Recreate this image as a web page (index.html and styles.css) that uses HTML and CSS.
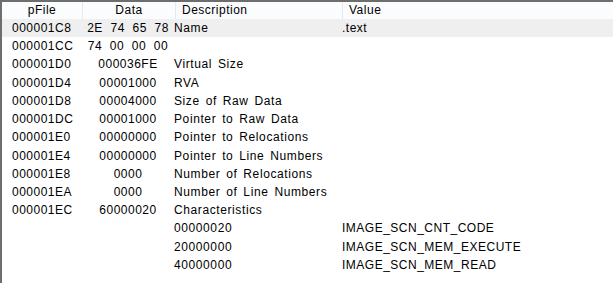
FILE: index.html
```html
<!DOCTYPE html>
<html>
<head>
<meta charset="utf-8">
<link rel="stylesheet" href="styles.css">
</head>
<body>
<div class="list">
  <div class="head">
    <div class="hc c-pfile">pFile</div>
    <div class="hc c-data sep">Data</div>
    <div class="hc c-desc sep">Description</div>
    <div class="hc c-value sep">Value</div>
  </div>
  <div class="rows">
    <div class="row sel"><div class="pf">000001C8</div><div class="dt">2E&nbsp;&nbsp;74&nbsp;&nbsp;65&nbsp;&nbsp;78</div><div class="ds">Name</div><div class="vl">.text</div></div>
    <div class="row"><div class="pf">000001CC</div><div class="dt">74&nbsp;&nbsp;00&nbsp;&nbsp;00&nbsp;&nbsp;00</div><div class="ds"></div><div class="vl"></div></div>
    <div class="row"><div class="pf">000001D0</div><div class="dt">000036FE</div><div class="ds">Virtual Size</div><div class="vl"></div></div>
    <div class="row"><div class="pf">000001D4</div><div class="dt">00001000</div><div class="ds">RVA</div><div class="vl"></div></div>
    <div class="row"><div class="pf">000001D8</div><div class="dt">00004000</div><div class="ds">Size of Raw Data</div><div class="vl"></div></div>
    <div class="row"><div class="pf">000001DC</div><div class="dt">00001000</div><div class="ds">Pointer to Raw Data</div><div class="vl"></div></div>
    <div class="row"><div class="pf">000001E0</div><div class="dt">00000000</div><div class="ds">Pointer to Relocations</div><div class="vl"></div></div>
    <div class="row"><div class="pf">000001E4</div><div class="dt">00000000</div><div class="ds">Pointer to Line Numbers</div><div class="vl"></div></div>
    <div class="row"><div class="pf">000001E8</div><div class="dt">0000</div><div class="ds">Number of Relocations</div><div class="vl"></div></div>
    <div class="row"><div class="pf">000001EA</div><div class="dt">0000</div><div class="ds">Number of Line Numbers</div><div class="vl"></div></div>
    <div class="row"><div class="pf">000001EC</div><div class="dt">60000020</div><div class="ds">Characteristics</div><div class="vl"></div></div>
    <div class="row"><div class="pf"></div><div class="dt"></div><div class="ds">00000020</div><div class="vl">IMAGE_SCN_CNT_CODE</div></div>
    <div class="row"><div class="pf"></div><div class="dt"></div><div class="ds">20000000</div><div class="vl">IMAGE_SCN_MEM_EXECUTE</div></div>
    <div class="row"><div class="pf"></div><div class="dt"></div><div class="ds">40000000</div><div class="vl">IMAGE_SCN_MEM_READ</div></div>
  </div>
</div>
</body>
</html>
```

FILE: styles.css
```css
html, body {
  margin: 0;
  padding: 0;
  background: #ffffff;
}
body {
  font-family: "Liberation Sans", Arial, sans-serif;
  font-size: 12px;
  letter-spacing: 0.5px;
  color: #000000;
}
.list {
  width: 613px;
  height: 283px;
  box-sizing: border-box;
  border-top: 2px solid #6e6e6e;
  border-left: 2px solid #6e6e6e;
  overflow: hidden;
}
.head {
  display: grid;
  grid-template-columns: 80px 93px 167px 1fr;
  height: 17px;
  background: #fbfcfd;
}
.hc {
  line-height: 17px;
  white-space: nowrap;
}
.sep {
  border-left: 1px solid #e3e9ef;
}
.c-pfile {
  text-align: center;
}
.c-data {
  text-align: center;
}
.c-desc, .c-value {
  padding-left: 6px;
}
.row {
  display: grid;
  grid-template-columns: 80px 92px 168px 1fr;
  height: 18.23px;
  line-height: 18px;
  white-space: nowrap;
}
.row.sel {
  background: #efefef;
}
.pf {
  padding-left: 10px;
}
.dt {
  text-align: center;
}
.ds {
  padding-left: 0;
  letter-spacing: 0.6px;
  word-spacing: 2px;
}
.vl {
  padding-left: 0;
}
```
